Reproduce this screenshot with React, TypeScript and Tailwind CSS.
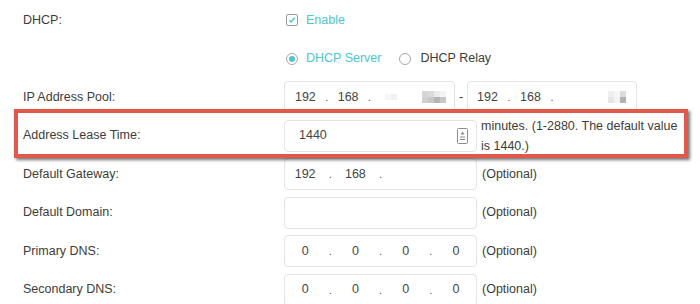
import React from "react";

const TEAL = "#4cc6cf";

function Label({ children }: { children: React.ReactNode }) {
  return <div className="w-[284px] shrink-0 pl-[23px]">{children}</div>;
}

function Row({ children, className = "" }: { children: React.ReactNode; className?: string }) {
  return <div className={`h-[38.5px] flex items-center ${className}`}>{children}</div>;
}

function Censor({ cells }: { cells: string[][] }) {
  return (
    <div className="flex flex-col">
      {cells.map((row, i) => (
        <div key={i} className="flex">
          {row.map((c, j) => (
            <div key={j} className="w-[6px] h-[6px]" style={{ backgroundColor: c }} />
          ))}
        </div>
      ))}
    </div>
  );
}

function IpBox({
  values,
  width,
  pad,
  dots = 3,
}: {
  values: React.ReactNode[];
  width: string;
  pad: string;
  dots?: number;
}) {
  return (
    <div
      className={`${width} ${pad} h-[32px] shrink-0 rounded-[4px] border border-[#e3e3e3] bg-white flex items-center text-[#444]`}
    >
      {values.map((v, i) => (
        <React.Fragment key={i}>
          {i > 0 && (
            <div className="w-[14px] text-center text-[11px] text-[#555]">{i <= dots ? "." : ""}</div>
          )}
          <div className="flex-1 flex justify-center">{v}</div>
        </React.Fragment>
      ))}
    </div>
  );
}

function SpinIcon() {
  return (
    <svg width="11" height="16" viewBox="0 0 11 16" fill="none">
      <rect x="0.5" y="0.5" width="10" height="15" rx="1" stroke="#8a8a8a" />
      <path d="M5.5 3.5 L7.5 6.5 L3.5 6.5 Z" fill="#8a8a8a" />
      <path d="M3 9 H8" stroke="#8a8a8a" />
      <path d="M3 11.5 H8" stroke="#8a8a8a" />
    </svg>
  );
}

export default function App() {
  return (
    <div className="w-[700px] h-[304px] bg-white overflow-hidden pt-[1px] font-['Liberation_Sans',Arial,sans-serif] text-[12.5px] text-[#3c3c3c]">
      {/* DHCP */}
      <Row>
        <Label>DHCP:</Label>
        <div className="flex items-center ml-[2px]">
          <div className="w-[12px] h-[12px] rounded-[2px] border border-[#9a9a9a] flex items-center justify-center">
            <svg width="8" height="8" viewBox="0 0 8 8" fill="none">
              <path d="M1.2 4.2 L3.2 6 L6.8 1.8" stroke={TEAL} strokeWidth="1.4" />
            </svg>
          </div>
          <span className="ml-[8px]" style={{ color: TEAL }}>
            Enable
          </span>
        </div>
      </Row>

      {/* radios */}
      <Row>
        <Label>{""}</Label>
        <div className="flex items-center ml-[2px]">
          <div className="w-[12px] h-[12px] rounded-full border border-[#a8a8a8] flex items-center justify-center">
            <div className="w-[6px] h-[6px] rounded-full" style={{ backgroundColor: TEAL }} />
          </div>
          <span className="ml-[8px]" style={{ color: TEAL }}>
            DHCP Server
          </span>
          <div className="ml-[18px] w-[12px] h-[12px] rounded-full border border-[#a8a8a8]" />
          <span className="ml-[9px] text-[#3c3c3c]">DHCP Relay</span>
        </div>
      </Row>

      {/* IP pool */}
      <Row>
        <Label>IP Address Pool:</Label>
        <IpBox
          width="w-[171px]"
          pad="px-[6px]"
          dots={2}
          values={[
            "192",
            "168",
            <Censor key="a" cells={[["#f6f6f6", "#f1f1f1"]]} />,
            <Censor
              key="b"
              cells={[
                ["#d6d6d6", "#dadada", "#ececec", "#f4f4f4"],
                ["#d0d0d0", "#c8c8c8", "#b4b4b4", "#c6c6c6"],
              ]}
            />,
          ]}
        />
        <div className="w-[12px] text-center">-</div>
        <IpBox
          width="w-[170px]"
          pad="px-[5px]"
          dots={2}
          values={[
            "192",
            "168",
            "",
            <Censor
              key="c"
              cells={[
                ["#eeeeee", "#f6f6f6", "#dcdcdc"],
                ["#e6e6e6", "#f4f4f4", "#b2b2b2"],
              ]}
            />,
          ]}
        />
      </Row>

      {/* Lease time */}
      <Row className="relative">
        <Label>Address Lease Time:</Label>
        <div className="w-[193px] h-[32px] shrink-0 rounded-[4px] border border-[#e3e3e3] flex items-center justify-between pl-[14px] pr-[8px] text-[#444]">
          <span>1440</span>
          <SpinIcon />
        </div>
        <div className="ml-[4px] w-[205px] leading-[20px] text-[#3c3c3c]">
          minutes. (1-2880. The default value
          <br />
          is 1440.)
        </div>
        <div className="absolute left-[14px] top-[-7.5px] w-[674px] h-[49px] border-[4px] border-[#e2584b] shadow-[2px_2px_3px_rgba(0,0,0,0.55)] pointer-events-none" />
      </Row>

      {/* Gateway */}
      <Row>
        <Label>Default Gateway:</Label>
        <IpBox width="w-[193px]" pad="px-[2px]" dots={2} values={["192", "168", "", ""]} />
        <span className="ml-[5px]">(Optional)</span>
      </Row>

      {/* Domain */}
      <Row>
        <Label>Default Domain:</Label>
        <div className="w-[193px] h-[32px] shrink-0 rounded-[4px] border border-[#e3e3e3]" />
        <span className="ml-[5px]">(Optional)</span>
      </Row>

      {/* Primary DNS */}
      <Row>
        <Label>Primary DNS:</Label>
        <IpBox width="w-[193px]" pad="px-[2px]" values={["0", "0", "0", "0"]} />
        <span className="ml-[5px]">(Optional)</span>
      </Row>

      {/* Secondary DNS */}
      <Row>
        <Label>Secondary DNS:</Label>
        <IpBox width="w-[193px]" pad="px-[2px]" values={["0", "0", "0", "0"]} />
        <span className="ml-[5px]">(Optional)</span>
      </Row>
    </div>
  );
}
